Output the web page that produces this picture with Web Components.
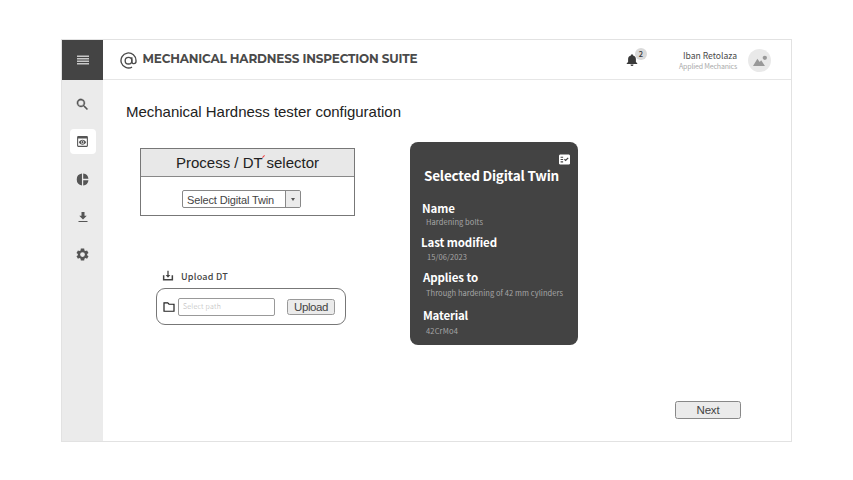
<!DOCTYPE html>
<html lang="en">
<head>
<meta charset="utf-8">
<title>Mechanical Hardness Inspection Suite</title>
<style>
body{margin:0;background:#fff;font-family:"Liberation Sans",Arial,sans-serif}
</style>
</head>
<body>
<hardness-app></hardness-app>
<script>
const define = (name, css, html, ready) => customElements.define(name, class extends HTMLElement {
  connectedCallback() {
    if (this.shadowRoot) return;
    this.attachShadow({mode: 'open'}).innerHTML = `<style>${css}</style>${html}`;
    if (ready) ready(this);
  }
});

/* One line of text whose letter spacing adapts to the width given in "w". */
define('fit-text', `
:host{display:block;white-space:nowrap;width:max-content}
span{display:inline-block}`, `<span><slot></slot></span>`, el => {
  const target = +el.getAttribute('w');
  const width = el.shadowRoot.querySelector('span').getBoundingClientRect().width;
  const n = el.textContent.length;
  if (target && width) el.style.letterSpacing = ((target - width) / n).toFixed(3) + 'px';
});

const ICONS = {
  menu: '<path d="M0 3h24v3H0zM0 8h24v3H0zM0 13h24v3H0zM0 18h24v3H0z"/>',
  search: '<path stroke="currentColor" stroke-width=".6" d="M15.5 14h-.8l-.3-.3A6.500 6.500 0 1 0 13.700 14.400l.3.3v.8l5 5 1.500-1.500zM9.500 14a4.500 4.500 0 1 1 0-9 4.500 4.500 0 0 1 0 9z"/>',
  preview: '<path fill-rule="evenodd" d="M20 2H4a2 2 0 0 0-2 2v16a2 2 0 0 0 2 2h16a2 2 0 0 0 2-2V4a2 2 0 0 0-2-2zm0 18H4V6.500h16zM12 8.600c-3 0-5.500 1.800-6.700 4.600 1.200 2.800 3.700 4.600 6.700 4.600s5.500-1.800 6.700-4.600c-1.200-2.800-3.700-4.600-6.700-4.600zm0 7.600a3 3 0 1 1 0-6 3 3 0 0 1 0 6z"/><circle cx="12" cy="13.200" r="1.900"/>',
  pie: '<path d="M11 1v22A11.100 11.100 0 0 1 11 1zM13.300 1v9.700H23A11 11 0 0 0 13.300 1zM13.300 13.300V23a11 11 0 0 0 9.700-9.700z"/>',
  download: '<path d="M19.500 9.500H15V2H9v7.500H4.500L12 17zM3 20h18v2H3z"/>',
  gear: '<path fill-rule="evenodd" d="M19.400 13a7.500 7.500 0 0 0 0-2l2.200-1.600-2.300-4-2.500 1a7.500 7.500 0 0 0-1.700-1L14.700 2.500H9.300L8.900 5.400a7.500 7.500 0 0 0-1.700 1l-2.500-1-2.300 4L4.600 11a7.500 7.500 0 0 0 0 2l-2.200 1.600 2.300 4 2.500-1a7.500 7.500 0 0 0 1.700 1l.4 2.900h5.400l.4-2.900a7.500 7.500 0 0 0 1.700-1l2.500 1 2.300-4zM12 15.800a3.800 3.800 0 1 1 0-7.600 3.800 3.800 0 0 1 0 7.600z"/>',
  at: '<path fill="none" stroke="currentColor" stroke-width="1.900" d="M17 21.300A10.600 10.600 0 1 1 22.600 12v1.500c0 3.800-5.900 4-5.900 0V7.500"/><circle cx="12" cy="12.200" r="4.700" fill="none" stroke="currentColor" stroke-width="1.900"/>',
  bell: '<path d="M12 24a3 3 0 0 0 3-3H9a3 3 0 0 0 3 3zM19.800 16v-6c0-3.600-2-6.400-5.700-7.200V.8H9.900v2C6.200 3.600 4.200 6.400 4.200 10v6L1.500 18.300V20h21v-1.700z"/>',
  picture: '<path d="M0 20.500 7.500 8l4 5.500L14 10.500l6.500 10z"/><circle cx="20.300" cy="6.500" r="3.700"/>',
  tray: '<path d="M13.300 1.500h-2.600v8.700H7.300L12 15.600l4.700-5.400h-3.400zM1.800 10.500h3V18h14.400v-7.500h3V21H1.800z"/>',
  folder: '<path d="M2 3.800h7.500L12 6.500h10v14H2z" fill="none" stroke="currentColor" stroke-width="2.400"/>',
  facts: '<path fill-rule="evenodd" d="M2 1h20l2 2v18l-2 2H2l-2-2V3zM3.500 6v2.300H9V6zM3.500 11v2.300H9V11zM3.500 16v2.300H9V16zM11 12.300l3.500 3.500 6.500-6.500-1.800-1.800-4.700 4.700-1.700-1.700z"/>'
};
define('ui-icon', `:host{display:block;flex:none;width:13px;height:13px}svg{display:block;width:100%;height:100%;fill:currentColor}`,
  '', el => {
    el.shadowRoot.innerHTML += `<svg viewBox="0 0 24 24">${ICONS[el.getAttribute('name')]}</svg>`;
  });

define('side-bar', `
:host{display:flex;flex-direction:column;align-items:center;width:41px;background:#ebebeb;color:#555}
.menu{width:100%;height:40px;background:#444;color:#c8c8c8;display:grid;place-items:center}
nav{display:flex;flex-direction:column;gap:12.500px;padding-top:11.500px}
nav div{width:26px;height:25px;display:grid;place-items:center;border-radius:4px}
.on{background:#fff}`,
`<div class="menu"><ui-icon name="menu" style="width:12px;height:12px"></ui-icon></div>
<nav><div><ui-icon name="search" style="width:15px;height:15px"></ui-icon></div>
<div class="on"><ui-icon name="preview"></ui-icon></div>
<div><ui-icon name="pie"></ui-icon></div>
<div><ui-icon name="download" style="width:12px;height:12px"></ui-icon></div>
<div><ui-icon name="gear" style="width:15px;height:15px"></ui-icon></div></nav>`);

define('top-bar', `
:host{display:flex;height:39px;box-sizing:content-box;border-bottom:1px solid #e6e6e6;color:#4a4a4a}
.logo{width:17px;height:17px;margin:12px 0 0 16.500px}
h1{margin:9.500px 0 0 6px;font:700 12px/18px Montserrat,Lato,"Open Sans",sans-serif}
.bell{position:relative;margin:13px 0 0 auto;width:12px;height:14px;color:#3a3a3a}
.bell b{position:absolute;left:9px;top:-5px;width:12px;height:12px;border-radius:50%;background:#dadada;font:500 7.500px/12px "Noto Sans CJK JP",sans-serif;text-align:center}
.user{width:70px;margin:9px 0 0 29px;display:flex;flex-direction:column;align-items:flex-end;font-family:"Noto Sans CJK JP",sans-serif}
.n{font-size:8.600px;line-height:13px}
.r{font-size:7px;line-height:9px;color:#aaa}
.av{margin:9px 20px 0 11px;width:23px;height:23px;border-radius:50%;background:#e9e9e9;color:#999;display:grid;place-items:center}`,
`<ui-icon class="logo" name="at"></ui-icon>
<h1><fit-text w="275">MECHANICAL HARDNESS INSPECTION SUITE</fit-text></h1>
<div class="bell"><ui-icon name="bell" style="width:12px;height:14px"></ui-icon><b>2</b></div>
<div class="user"><fit-text class="n" w="54">Iban Retolaza</fit-text><fit-text class="r" w="58">Applied Mechanics</fit-text></div>
<div class="av"><ui-icon name="picture" style="width:14px;height:14px"></ui-icon></div>`);

define('ui-button', `
:host{display:grid;place-items:center;box-sizing:border-box;border:1px solid #999;border-radius:2.500px;background:#ebebeb;color:#444;font-size:11.500px;line-height:14px}`,
`<slot></slot>`);

define('process-selector', `
:host{display:block;box-sizing:border-box;width:215px;height:68px;border:1px solid #777;background:#fff}
header{height:27px;background:#e8e8e8;border-bottom:1px solid #888;display:flex;justify-content:center;color:#222;font-size:15px;line-height:27px;position:relative}
i{position:absolute;left:121px;top:7px;width:3px;height:1px;background:#f04444;transform:rotate(-45deg)}
.sel{display:flex;box-sizing:border-box;width:119px;height:18px;margin:13px 0 0 41px;border:1px solid #888;border-radius:2px;color:#444;font-size:11px;line-height:18px;overflow:hidden}
.sel fit-text{padding-left:4px;flex:none}
.arrow{margin-left:auto;width:14px;background:#ebebeb;border-left:1px solid #888;display:grid;place-items:center}
.arrow:after{content:"";border:2px solid transparent;border-top:3px solid #555;border-bottom:0}`,
`<header><fit-text w="143">Process / DT selector</fit-text><i></i></header>
<div class="sel"><fit-text w="87">Select Digital Twin</fit-text><span class="arrow"></span></div>`);

define('upload-panel', `
:host{display:block;width:190px}
.head{display:flex;align-items:center;height:16px;padding-left:6px;gap:7px;color:#444;font:500 9px/16px "Noto Sans CJK JP",sans-serif}
.head fit-text{padding-top:1px}
.box{box-sizing:border-box;height:37px;margin-top:4px;border:1.500px solid #777;border-radius:9px;display:flex;align-items:center;padding:0 10px 0 6px}
.in{box-sizing:border-box;width:97px;height:18px;margin-left:3px;border:1px solid #999;border-radius:2px;padding-left:4px;color:#b4b4b4;font:300 7px/15px "Noto Sans CJK JP",sans-serif}
ui-button{width:48px;height:16px;margin-left:auto}`,
`<div class="head"><ui-icon name="tray" style="width:12px;height:12px"></ui-icon><fit-text w="47">Upload DT</fit-text></div>
<div class="box"><ui-icon name="folder" style="width:12px;height:12px;color:#222"></ui-icon><div class="in"><fit-text w="38">Select path</fit-text></div>
<ui-button><fit-text w="34">Upload</fit-text></ui-button></div>`);

/* Label and value of one property of the digital twin. */
customElements.define('field-row', class extends HTMLElement {
  connectedCallback() {
    if (this.shadowRoot) return;
    const a = k => this.getAttribute(k);
    this.attachShadow({mode: 'open'}).innerHTML = `<style>
:host{display:block}
.l{font-size:11.500px;font-weight:700;line-height:16px;color:#fff}
.v{font-size:7.500px;line-height:12px;color:#a6a6a6;margin:var(--drop,1px) 0 0 var(--indent,4px)}</style>
<fit-text class="l" w="${a('lw')}">${a('label')}</fit-text><fit-text class="v" w="${a('vw')}">${a('value')}</fit-text>`;
  }
});

define('twin-card', `
:host{display:block;box-sizing:border-box;width:168px;height:203px;border-radius:8px;background:#434343;padding:12px 8px 0 11px;font-family:"Noto Sans CJK JP",sans-serif;color:#fff}
.top{display:flex;justify-content:flex-end}
h2{margin:0 0 0 3px;font-size:13.500px;font-weight:700;line-height:20px}
.fields{display:flex;flex-direction:column;margin-top:15px;padding-left:1px}`,
`<div class="top"><ui-icon name="facts" style="width:11px;height:11px"></ui-icon></div>
<h2><fit-text w="135">Selected Digital Twin</fit-text></h2>
<div class="fields">
<field-row style="--drop:0px" label="Name" lw="33" value="Hardening bolts" vw="57"></field-row>
<field-row style="margin:6px 0 0 -1px;--indent:6px" label="Last modified" lw="76" value="15/06/2023" vw="40"></field-row>
<field-row style="margin:6px 0 0 1px;--indent:3px;--drop:2px" label="Applies to" lw="55" value="Through hardening of 42 mm cylinders" vw="137"></field-row>
<field-row style="margin:8px 0 0 1px;--indent:3px;--drop:2px" label="Material" lw="45" value="42CrMo4" vw="32"></field-row>
</div>`);

define('hardness-app', `
:host{display:flex;box-sizing:border-box;width:731px;height:403px;margin:39px 0 0 61px;border:1px solid #e2e2e2;background:#fff}
.page{flex:1;display:flex;flex-direction:column}
main{flex:1;display:flex;flex-direction:column;padding:22px 50px 22px 23px}
h3{margin:0;font-size:15px;font-weight:400;line-height:20px;color:#222}
.cols{display:grid;grid-template-columns:284px 168px;margin-top:20px}
.left{padding:6px 0 0 14px}
upload-panel{margin:52px 0 0 16px}
ui-button{width:66px;height:18px;margin:auto 0 0 auto;border-color:#888}`,
`<side-bar></side-bar>
<div class="page"><top-bar></top-bar>
<main><h3><fit-text w="275">Mechanical Hardness tester configuration</fit-text></h3>
<div class="cols"><div class="left"><process-selector></process-selector><upload-panel></upload-panel></div><twin-card></twin-card></div>
<ui-button><fit-text w="23">Next</fit-text></ui-button></main></div>`);
</script>
</body>
</html>
